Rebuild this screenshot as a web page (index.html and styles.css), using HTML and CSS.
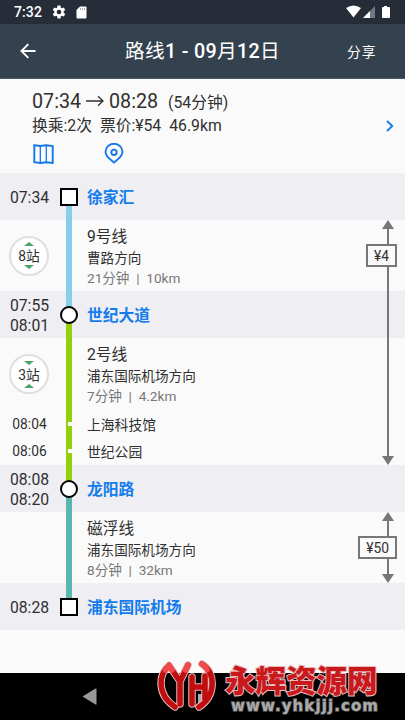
FILE: index.html
```html
<!DOCTYPE html>
<html lang="zh-CN">
<head>
<meta charset="utf-8">
<meta name="viewport" content="width=device-width, initial-scale=1">
<title>路线1</title>
<link rel="stylesheet" href="styles.css">
</head>
<body>
<div class="screen">
  <div class="status">
    <span class="clock">7:32</span>
    <svg class="gear" width="14" height="14" viewBox="0 0 24 24"><path fill="#fff" fill-rule="evenodd" d="M9.5 1h5l.5 3.4 2 1.2 3.200-1.300 2.500 4.300-2.700 2.100v2.600l2.700 2.100-2.500 4.300-3.200-1.300-2 1.200-.5 3.400h-5L9 19.600l-2-1.200-3.200 1.300-2.500-4.300L4 13.300v-2.600L1.300 8.600l2.500-4.300L7 5.600l2-1.200zM12 8a4 4 0 1 0 0 8 4 4 0 0 0 0-8z"/></svg>
    <svg class="sd" width="11" height="13" viewBox="0 0 11 13"><path fill="#fff" d="M4 .5h5.500q1 0 1 1v10q0 1-1 1h-8q-1 0-1-1V4z"/><path stroke="#aaa" d="M4.500 2v2M6.500 2v2M8.500 2v2"/></svg>
    <svg class="signals" width="45" height="14" viewBox="0 0 45 14"><path fill="#fff" d="M0 3q7.500-5 15 0L7.500 12.500z"/><path fill="#737983" d="M29 1v12H17z"/><path fill="#fff" d="M24 6v7h-7z"/><path fill="#fff" d="M38 1h3v1h2q1 0 1 1v9q0 1-1 1h-6q-1 0-1-1V3q0-1 1-1h1z"/></svg>
  </div>
  <header class="bar">
    <svg class="back" width="16" height="16" viewBox="0 0 16 16" fill="none" stroke="#fff" stroke-width="1.900"><path d="M15.500 8H1.500M8.300 1.200 1.500 8l6.800 6.800"/></svg>
    <h1>路线<b>1 - 09</b>月<b>12</b>日</h1>
    <span class="share">分享</span>
  </header>
  <section class="summary">
    <div class="sum-text">
      <div class="when"><span>07:34</span><svg width="18" height="12" viewBox="0 0 18 12" fill="none" stroke="#303030" stroke-width="1.300"><path d="M0 6h17M12 1.200 17 6l-5 4.800"/></svg><span>08:28</span><small>(54分钟)</small></div>
      <div class="facts"><span>换乘:2次</span><span>票价:¥54</span><span>46.9km</span></div>
      <div class="tools">
        <svg width="21" height="20" viewBox="0 0 21 20" fill="none" stroke="#1679e6"><path stroke-width="1.900" d="M1.300 1.200 7.300 2l6-.8 6.400.8v17l-6.400-.8-6 .8-6-.8z"/><path stroke-width="1.300" d="M7.300 2v17M13.300 1.500v17"/></svg>
        <svg width="20" height="21" viewBox="0 0 20 21" fill="none" stroke="#1679e6" stroke-width="1.900"><path d="M10 19.500C7 17 1.500 13.500 1.500 9a8.500 8.300 0 0 1 17 0c0 4.500-5.500 8-8.500 10.500z"/><circle cx="10" cy="9.300" r="2.700"/></svg>
      </div>
    </div>
    <svg class="chev" width="8" height="12" viewBox="0 0 8 12" fill="none" stroke="#0c7bea" stroke-width="1.800"><path d="M1 1l5.300 5L1 11"/></svg>
  </section>
  <main class="route">
    <div class="row station s1">
      <div class="time">07:34</div><div class="rail start"><i class="mark square"></i></div><div class="name">徐家汇</div>
    </div>
    <div class="row leg l1">
      <div class="count"><svg width="10" height="4"><path d="M0 4 5 0l5 4z"/></svg><span>8站</span><svg width="10" height="4"><path d="M0 0h10L5 4z"/></svg></div>
      <div class="rail blue"></div>
      <div class="info"><b>9号线</b><p>曹路方向</p><small>21分钟&nbsp; |&nbsp; 10km</small></div>
    </div>
    <div class="row station s2">
      <div class="time">07:55<br>08:01</div><div class="rail blue-green"><i class="mark"></i></div><div class="name">世纪大道</div>
    </div>
    <div class="l2">
      <div class="row leg">
        <div class="count"><svg width="10" height="4"><path d="M0 0h10L5 4z"/></svg><span>3站</span><svg width="10" height="4"><path d="M0 4 5 0l5 4z"/></svg></div>
        <div class="rail green"></div>
        <div class="info"><b>2号线</b><p>浦东国际机场方向</p><small>7分钟&nbsp; |&nbsp; 4.2km</small></div>
      </div>
      <div class="row stop"><div class="time">08:04</div><div class="rail green"><i class="dot"></i></div><div class="place">上海科技馆</div></div>
      <div class="row stop"><div class="time">08:06</div><div class="rail green"><i class="dot"></i></div><div class="place">世纪公园</div></div>
    </div>
    <div class="row station s3">
      <div class="time">08:08<br>08:20</div><div class="rail green-teal"><i class="mark"></i></div><div class="name">龙阳路</div>
    </div>
    <div class="row leg l3">
      <div></div><div class="rail teal"></div>
      <div class="info"><b>磁浮线</b><p>浦东国际机场方向</p><small>8分钟&nbsp; |&nbsp; 32km</small></div>
    </div>
    <div class="row station s4">
      <div class="time">08:28</div><div class="rail end"><i class="mark square"></i></div><div class="name">浦东国际机场</div>
    </div>
    <div class="fare f1"><i class="tip up"></i><i class="stem first"></i><span>¥4</span><i class="stem"></i><i class="tip down"></i></div>
    <div class="fare f2"><i class="tip up"></i><i class="stem first"></i><span>¥50</span><i class="stem"></i><i class="tip down"></i></div>
  </main>
  <nav class="nav"><svg width="15" height="17" viewBox="0 0 15 17"><path fill="#999" d="M.5 8.500 13.500 .5q1-.4 1 .6v15q0 .8-1 .4z"/></svg></nav>
  <div class="brand">
    <svg width="62" height="54" viewBox="0 0 62 54">
      <path fill="#aaa" d="M41 34h12l-7 12h-5z"/>
      <g fill="none" stroke-linejoin="round" stroke-linecap="round">
        <path stroke="#e3b9b9" stroke-width="7.500" d="M12 5.500C1 15 0 35 18 47M12 5.500l11 16L31 5M23 21v23M35 17v27M45 4c14 9 14 32-3 43M35 27h13M48 16v24"/>
        <path stroke="#c20d10" stroke-width="5.500" d="M12 5.500C1 15 0 35 18 47M12 5.500l11 16L31 5M23 21v23M35 17v27M45 4c14 9 14 32-3 43M35 27h13M48 16v24"/>
        <path stroke="#f24a4a" stroke-width="5.500" d="M8.500 10l3.500-4.500 3 4.500M28.500 10 31 5M45 4q3 2 5 5.500"/>
      </g>
    </svg>
    <div class="words"><strong>永辉资源网</strong><em>www.yhkjjj.com</em></div>
  </div>
</div>
</body>
</html>
```
FILE: styles.css
```css
* { box-sizing: border-box; }
body {
  margin: 0;
  font-family: Roboto, "Noto Sans CJK SC", sans-serif;
  font-size: 15.75px;
  color: #303030;
}
h1, p { margin: 0; font-weight: 400; }
svg { display: block; flex: none; }
.screen {
  position: relative;
  width: 405px;
  height: 720px;
  overflow: hidden;
  display: flex;
  flex-direction: column;
  background: #fafafa;
}
.status {
  height: 24px;
  flex: none;
  display: flex;
  align-items: center;
  padding: 0 13px 0 14px;
  background: #262d38;
  color: #fff;
}
.clock { font-size: 14px; font-weight: 500; width: 38px; letter-spacing: .1px; }
.sd { margin-left: 10px; }
.signals { margin-left: auto; margin-right: 1px; width: 45px; }
.bar {
  height: 55px;
  flex: none;
  display: grid;
  grid-template-columns: 60px 1fr 60px;
  align-items: center;
  background: #34414f;
  border-bottom: 1px solid #465869;
  color: #fff;
}
.back { margin-left: 20px; }
.bar h1 { font-size: 19.7px; letter-spacing: .3px; line-height: 28px; padding-top: 2px; text-align: center; }
.bar h1 b { font-weight: 500; }
.share { font-size: 13.8px; letter-spacing: 1px; margin-left: 2px; }
.summary {
  height: 94px;
  flex: none;
  display: flex;
  align-items: center;
  padding: 0 11px 0 32px;
}
.sum-text { flex: 1; padding-top: 1px; }
.when { display: flex; align-items: center; height: 26px; font-size: 19.7px; }
.when svg { margin: 0 5px; }
.when small { font-size: 15.75px; margin: 1px 0 0 10px; }
.facts { display: flex; gap: 8px; height: 24px; line-height: 24px; }
.tools { display: flex; gap: 50px; align-items: center; height: 27px; padding: 4px 0 0 1px; }
.route {
  flex: none;
  display: grid;
  grid-template: 47px 71px 47px 127px 47px 71px 47px / 1fr 48px;
}
.s1 { grid-area: 1 / 1 / 2 / 3; }
.l1 { grid-area: 2 / 1 / 3 / 3; }
.s2 { grid-area: 3 / 1 / 4 / 3; }
.l2 { grid-area: 4 / 1 / 5 / 3; }
.s3 { grid-area: 5 / 1 / 6 / 3; }
.l3 { grid-area: 6 / 1 / 7 / 3; }
.s4 { grid-area: 7 / 1 / 8 / 3; }
.row { display: grid; grid-template-columns: 59px 20px 1fr; align-items: center; }
.station { background: #eeeef3; }
.station .time, .station .name { padding-top: 2px; }
.l2 { display: grid; grid-template-rows: 72px 27px 28px; }
.time { text-align: center; line-height: 20px; }
.rail {
  align-self: stretch;
  display: grid;
  place-items: center;
  background: linear-gradient(var(--a) 50%, var(--b) 50%) center / 6px 100% no-repeat;
}
.start { --a: transparent; --b: #87ceeb; }
.blue { --a: #87ceeb; --b: #87ceeb; }
.blue-green { --a: #87ceeb; --b: #93cf0b; }
.green { --a: #93cf0b; --b: #93cf0b; }
.green-teal { --a: #93cf0b; --b: #5bb6b0; }
.teal { --a: #5bb6b0; --b: #5bb6b0; }
.end { --a: #5bb6b0; --b: transparent; }
.mark { width: 18px; height: 18px; border: 2px solid #000; border-radius: 50%; background: #fff; }
.square { border-radius: 0; }
.dot { width: 4px; height: 4px; margin-left: 2px; background: #fff; }
.name { padding-left: 8px; color: #147cec; font-weight: 700; line-height: 22px; }
.info { align-self: start; padding: 6px 0 0 8px; }
.info b { display: block; font-weight: 400; line-height: 22px; }
.info p { font-size: 13.6px; line-height: 20px; }
.info small { display: block; font-size: 13.6px; line-height: 20px; color: #777; white-space: nowrap; }
.count {
  width: 40px;
  height: 40px;
  margin-left: 9px;
  border: 2px solid #dfdfdf;
  border-radius: 50%;
  display: flex;
  flex-direction: column;
  align-items: center;
  justify-content: center;
  background: #fff;
  font-size: 13.8px;
}
.count span { height: 19px; line-height: 21px; }
.count svg { fill: #45a563; }
.stop { font-size: 13.8px; }
.place { padding-left: 8px; }
.fare {
  z-index: 1;
  width: 39px;
  justify-self: end;
  margin-right: 8px;
  display: flex;
  flex-direction: column;
  align-items: flex-end;
}
.f1 { grid-area: 2 / 2 / 5 / 3; }
.f2 { grid-area: 6 / 2 / 7 / 3; }
.fare span {
  height: 23px;
  border: 2px solid #777;
  background: #fafafa;
  padding: 0 6px;
  font-size: 13.8px;
  line-height: 20px;
}
.tip { border: 6px solid transparent; border-width: 0 6px; margin-right: 3px; }
.up { border-bottom: 9px solid #777; }
.down { border-top: 9px solid #777; }
.stem { width: 2px; margin-right: 8px; flex: 1; background: #777; }
.first { flex: 0 0 15px; }
.nav {
  margin-top: auto;
  height: 47px;
  flex: none;
  display: flex;
  align-items: center;
  padding-left: 82px;
  background: #000;
}
.brand { position: absolute; left: 157px; top: 660px; display: flex; }
.words { margin: 0 0 0 6px; }
.words strong, .words em {
  display: block;
  white-space: nowrap;
  font-style: normal;
  paint-order: stroke fill;
}
.words strong {
  font: 900 30.5px/38px "Noto Sans CJK SC", sans-serif;
  color: #c9191c;
  -webkit-text-stroke: 2px #e6bcbc;
}
.words em {
  font: 700 15px/14px "DejaVu Sans", sans-serif;
  letter-spacing: 1.1px;
  color: #aaa;
  margin: 1px 0 0 6px;
  -webkit-text-stroke: 1.500px #555;
}
```
